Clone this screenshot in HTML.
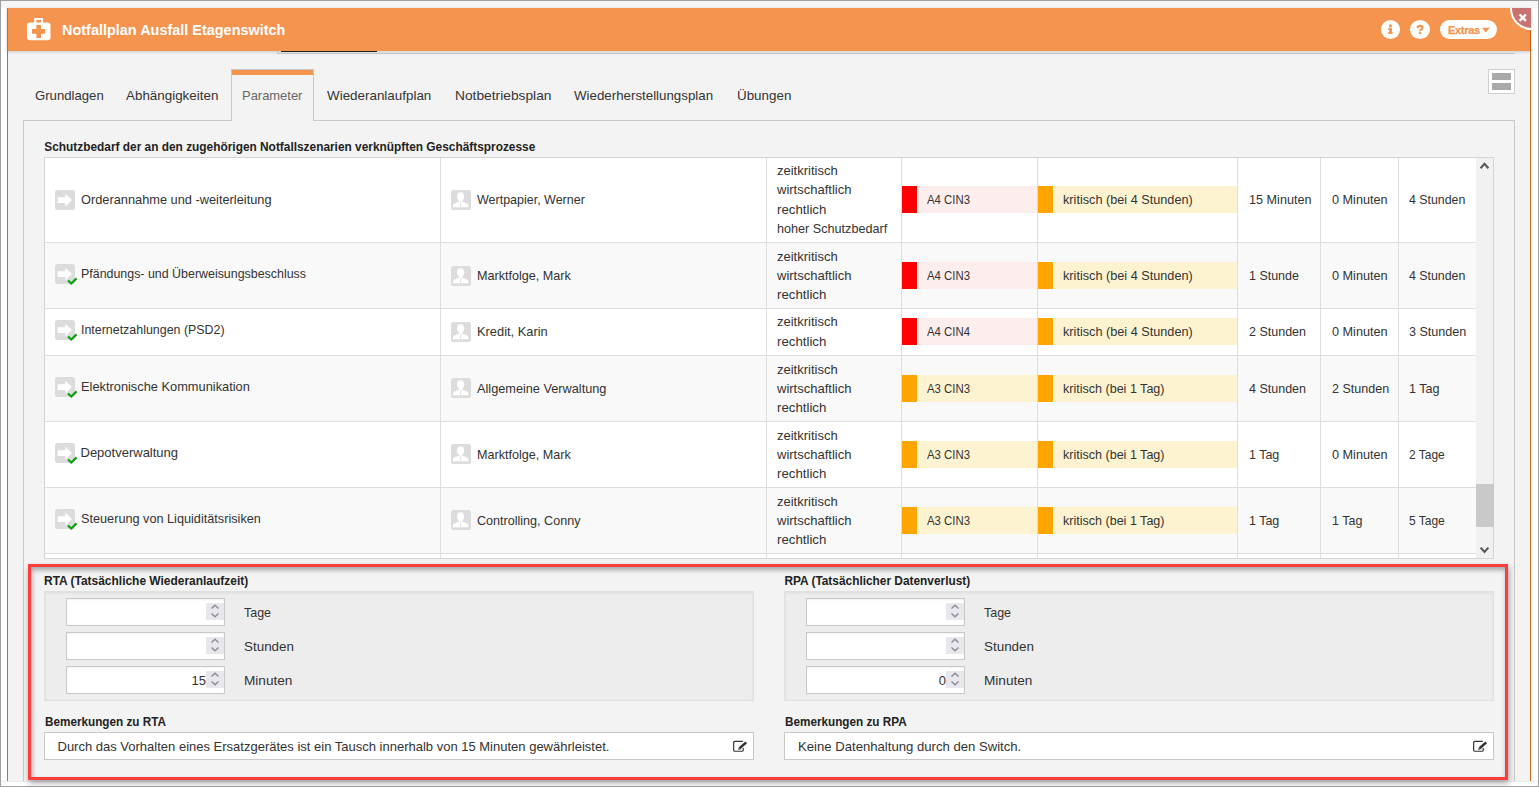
<!DOCTYPE html><html><head><meta charset="utf-8"><style>
html,body{margin:0;padding:0;}
body{width:1539px;height:787px;overflow:hidden;position:relative;background:#fff;font-family:"Liberation Sans",sans-serif;color:#333;}
.a{position:absolute;box-sizing:border-box;}
.t{position:absolute;white-space:nowrap;font-size:13px;line-height:19px;color:#333;}
.b{position:absolute;white-space:nowrap;font-size:11.88px;line-height:16px;font-weight:bold;color:#222;}
.h{position:absolute;white-space:nowrap;font-size:14.3px;line-height:19px;font-weight:bold;color:#fff;}
svg{position:absolute;overflow:visible;}
</style></head><body>
<div class="a" style="left:0px;top:0px;width:1539px;height:787px;border:1px solid #a0a0a0;background:#fff;"></div>
<div class="a" style="left:1px;top:1px;width:1537px;height:7px;background:#f6f6f6;"></div>
<div class="a" style="left:7px;top:8px;width:1524px;height:773px;background:#f3f3f3;border-left:1px solid #d2691e;border-right:1px solid #d2691e;"></div>
<div class="a" style="left:277px;top:40px;width:1238px;height:14px;border-bottom:1px solid #c9c9c9;border-left:1px solid #d5d5d5;background:#f3f3f3;"></div>
<div class="a" style="left:281px;top:50px;width:96px;height:2px;background:#222;"></div>
<div class="a" style="left:7px;top:8px;width:1524px;height:43px;background:#f4944f;box-shadow:0 1px 3px rgba(0,0,0,0.18);"></div>
<div class="a" style="left:7px;top:8px;width:1px;height:43px;background:#d2691e;"></div>
<svg style="left:27px;top:17px" width="24" height="24" viewBox="0 0 24 24">
<path fill="#fff" d="M7.2 1 H15.9 Q16.1 1 16.1 1.4 V5.6 H20.5 Q23.5 5.6 23.5 8.6 V20.3 Q23.5 23.3 20.5 23.3 H3 Q0 23.3 0 20.3 V8.6 Q0 5.6 3 5.6 H7.2 Z M9.4 3.1 V5.6 H14 V3.1 Z M9.4 7.9 V12.1 H5 V16.8 H9.4 V21 H14 V16.8 H18.2 V12.1 H14 V7.9 Z" fill-rule="evenodd"/>
</svg>
<div class="h" id="x1" style="left:61.5px;top:20.5px;transform:scaleX(1.0106);transform-origin:0 0;">Notfallplan Ausfall Etagenswitch</div>
<div class="a" style="left:1381px;top:20px;width:19px;height:19px;border-radius:50%;background:#fff;"></div>
<div class="a" style="left:1410px;top:20px;width:20px;height:19px;border-radius:50%;background:#fff;"></div>
<div class="a" style="left:1440px;top:20px;width:57px;height:19px;border-radius:10px;background:#fff;"></div>
<svg style="left:1375px;top:15px" width="60" height="30" viewBox="1375 15 60 30"><circle cx="1390.4" cy="25.9" r="1.55" fill="#f4944f"/><rect x="1388" y="28.3" width="3.9" height="1.6" fill="#f4944f"/><rect x="1389.2" y="28.3" width="2.7" height="5.5" fill="#f4944f"/><rect x="1387.9" y="32.2" width="4.8" height="1.6" fill="#f4944f"/><path d="M1417.7 28.1 Q1417.7 25.9 1420.1 25.9 Q1422.5 25.9 1422.5 27.8 Q1422.5 29 1420.8 29.8 Q1420.1 30.2 1420.1 31.3" stroke="#f4944f" stroke-width="2.1" fill="none"/><rect x="1418.9" y="32.1" width="2.4" height="1.8" fill="#f4944f"/></svg>
<div style="position:absolute;left:1448px;top:21px;height:19px;line-height:19px;font-weight:bold;font-size:11px;letter-spacing:-0.3px;-webkit-text-stroke:0.25px #f4944f;color:#f4944f;">Extras</div>
<svg style="left:1482px;top:27px" width="9" height="6"><path d="M0 0.7 H7.8 L3.9 5.4 Z" fill="#f4944f"/></svg>
<div class="a" style="left:1500px;top:8px;width:31px;height:23px;overflow:hidden;"><div class="a" style="left:10px;top:-21.5px;width:43px;height:43px;border-radius:50%;background:#c87272;border:2px solid #fff;"></div></div>
<svg style="left:1517px;top:12px" width="11" height="11"><path d="M2.6 2.5 L8.9 8.8 M8.9 2.5 L2.6 8.8" stroke="#fff" stroke-width="2.4"/></svg>
<div class="a" style="left:1530px;top:30px;width:1px;height:21px;background:#c0601a;"></div>
<div class="a" style="left:1488px;top:69px;width:27px;height:25px;background:#fff;border:1px solid #cfcfcf;"></div>
<div class="a" style="left:1492px;top:73px;width:19px;height:7px;background:#a9a9a9;"></div>
<div class="a" style="left:1492px;top:83px;width:19px;height:7px;background:#a9a9a9;"></div>
<div class="a" style="left:23px;top:120px;width:1492px;height:680px;border:1px solid #c8c8c8;background:#f3f3f3;"></div>
<div class="a" style="left:231px;top:69px;width:83px;height:52px;border:1px solid #c8c8c8;border-bottom:none;background:#f3f3f3;"></div>
<div class="a" style="left:232px;top:70px;width:81px;height:5px;background:#f4944f;"></div>
<div class="t" id="x2" style="left:34.6px;top:86.2px;color:#333;transform:scaleX(1.0119);transform-origin:0 0;">Grundlagen</div>
<div class="t" id="x3" style="left:126px;top:86.2px;color:#333;transform:scaleX(1.0303);transform-origin:0 0;">Abhängigkeiten</div>
<div class="t" id="x4" style="left:242.3px;top:86.2px;color:#666;transform:scaleX(0.9950);transform-origin:0 0;">Parameter</div>
<div class="t" id="x5" style="left:326.8px;top:86.2px;color:#333;transform:scaleX(1.0310);transform-origin:0 0;">Wiederanlaufplan</div>
<div class="t" id="x6" style="left:454.8px;top:86.2px;color:#333;transform:scaleX(1.0596);transform-origin:0 0;">Notbetriebsplan</div>
<div class="t" id="x7" style="left:573.8px;top:86.2px;color:#333;transform:scaleX(1.0237);transform-origin:0 0;">Wiederherstellungsplan</div>
<div class="t" id="x8" style="left:736.9px;top:86.2px;color:#333;transform:scaleX(1.0294);transform-origin:0 0;">Übungen</div>
<div class="b" id="x9" style="left:44.3px;top:139px;">Schutzbedarf der an den zugehörigen Notfallszenarien verknüpften Geschäftsprozesse</div>
<div class="a" style="left:44px;top:157px;width:1450px;height:402px;border:1px solid #d4d4d4;background:#fff;"></div>
<div class="a" style="left:45px;top:242px;width:1431px;height:1px;background:#dedede;"></div>
<div class="a" style="left:45px;top:243px;width:1431px;height:65px;background:#f9f9f9;"></div>
<div class="a" style="left:45px;top:308px;width:1431px;height:1px;background:#dedede;"></div>
<div class="a" style="left:45px;top:355px;width:1431px;height:1px;background:#dedede;"></div>
<div class="a" style="left:45px;top:356px;width:1431px;height:65px;background:#f9f9f9;"></div>
<div class="a" style="left:45px;top:421px;width:1431px;height:1px;background:#dedede;"></div>
<div class="a" style="left:45px;top:487px;width:1431px;height:1px;background:#dedede;"></div>
<div class="a" style="left:45px;top:488px;width:1431px;height:65px;background:#f9f9f9;"></div>
<div class="a" style="left:45px;top:553px;width:1431px;height:1px;background:#dedede;"></div>
<div class="a" style="left:45px;top:554px;width:1431px;height:4px;background:#fff;"></div>
<div class="a" style="left:440px;top:158px;width:1px;height:400px;background:#dedede;"></div>
<div class="a" style="left:766px;top:158px;width:1px;height:400px;background:#dedede;"></div>
<div class="a" style="left:901px;top:158px;width:1px;height:400px;background:#dedede;"></div>
<div class="a" style="left:1037px;top:158px;width:1px;height:400px;background:#dedede;"></div>
<div class="a" style="left:1237px;top:158px;width:1px;height:400px;background:#dedede;"></div>
<div class="a" style="left:1320px;top:158px;width:1px;height:400px;background:#dedede;"></div>
<div class="a" style="left:1398px;top:158px;width:1px;height:400px;background:#dedede;"></div>
<div class="a" style="left:1476px;top:158px;width:17px;height:400px;background:#f1f1f1;"></div>
<div class="a" style="left:1476px;top:484px;width:18px;height:43px;background:#c9c9c9;"></div>
<svg style="left:1479px;top:161px" width="11" height="9"><path d="M1.6 7.2 L5.5 2.9 L9.4 7.2" stroke="#555" stroke-width="2.1" fill="none"/></svg>
<svg style="left:1479px;top:546px" width="11" height="9"><path d="M1.6 1.6 L5.5 5.9 L9.4 1.6" stroke="#555" stroke-width="2.1" fill="none"/></svg>
<svg style="left:55px;top:190px" width="22" height="22" viewBox="0 0 22 22"><rect x="0" y="0" width="20" height="20" rx="2.5" fill="#dcdcdc"/><path d="M2.6 7.2 H10.3 V3.8 L17 10.1 L10.3 16.4 V13 H2.6 Z" fill="#fff"/></svg>
<div class="t" id="x10" style="left:80.5px;top:190px;transform:scaleX(0.9839);transform-origin:0 0;">Orderannahme und -weiterleitung</div>
<svg style="left:451px;top:190px" width="20" height="20" viewBox="0 0 20 20"><rect x="0" y="0" width="20" height="20" rx="2.5" fill="#dcdcdc"/><ellipse cx="9.6" cy="6.6" rx="3.5" ry="4.4" fill="#fff"/><path d="M7.8 10 L8.4 11.6 L3.5 13.4 Q1.8 14.2 1.8 16.2 V17.3 H17.6 V16.2 Q17.6 14.2 15.9 13.4 L11 11.6 L11.6 10 Z" fill="#fff"/><path d="M9.7 11.5 V17.3" stroke="#dcdcdc" stroke-width="0.9"/></svg>
<div class="t" id="x11" style="left:476.5px;top:190px;transform:scaleX(0.9607);transform-origin:0 0;">Wertpapier, Werner</div>
<div class="t" id="x12" style="left:777px;top:161px;">zeitkritisch</div>
<div class="t" id="x13" style="left:777px;top:180px;">wirtschaftlich</div>
<div class="t" id="x14" style="left:777px;top:200px;transform:scaleX(1.0191);transform-origin:0 0;">rechtlich</div>
<div class="t" id="x15" style="left:777px;top:219px;transform:scaleX(0.9717);transform-origin:0 0;">hoher Schutzbedarf</div>
<div class="a" style="left:902px;top:186px;width:15px;height:27px;background:#ff0000;"></div>
<div class="a" style="left:917px;top:186px;width:120px;height:27px;background:#feeded;"></div>
<div class="t" id="x16" style="left:927px;top:190px;transform:scaleX(0.8755);transform-origin:0 0;">A4 CIN3</div>
<div class="a" style="left:1038px;top:186px;width:15px;height:27px;background:#ffa500;"></div>
<div class="a" style="left:1053px;top:186px;width:184px;height:27px;background:#fef3d0;"></div>
<div class="t" id="x17" style="left:1063px;top:190px;transform:scaleX(0.9756);transform-origin:0 0;">kritisch (bei 4 Stunden)</div>
<div class="t" id="x18" style="left:1248.5px;top:190px;transform:scaleX(0.9714);transform-origin:0 0;">15 Minuten</div>
<div class="t" id="x19" style="left:1331.5px;top:190px;transform:scaleX(0.9732);transform-origin:0 0;">0 Minuten</div>
<div class="t" id="x20" style="left:1409.3px;top:190px;transform:scaleX(0.9508);transform-origin:0 0;">4 Stunden</div>
<svg style="left:55px;top:264px" width="22" height="22" viewBox="0 0 22 22"><rect x="0" y="0" width="20" height="20" rx="2.5" fill="#dcdcdc"/><path d="M2.6 7.2 H10.3 V3.8 L17 10.1 L10.3 16.4 V13 H2.6 Z" fill="#fff"/><path d="M13 16.5 L16.3 19.6 L21.6 14.4" stroke="#0ca00c" stroke-width="2.2" fill="none"/></svg>
<div class="t" id="x21" style="left:80.5px;top:264px;transform:scaleX(0.9549);transform-origin:0 0;">Pfändungs- und Überweisungsbeschluss</div>
<svg style="left:451px;top:266px" width="20" height="20" viewBox="0 0 20 20"><rect x="0" y="0" width="20" height="20" rx="2.5" fill="#dcdcdc"/><ellipse cx="9.6" cy="6.6" rx="3.5" ry="4.4" fill="#fff"/><path d="M7.8 10 L8.4 11.6 L3.5 13.4 Q1.8 14.2 1.8 16.2 V17.3 H17.6 V16.2 Q17.6 14.2 15.9 13.4 L11 11.6 L11.6 10 Z" fill="#fff"/><path d="M9.7 11.5 V17.3" stroke="#dcdcdc" stroke-width="0.9"/></svg>
<div class="t" id="x22" style="left:476.5px;top:266px;transform:scaleX(0.9688);transform-origin:0 0;">Marktfolge, Mark</div>
<div class="t" id="x23" style="left:777px;top:247px;">zeitkritisch</div>
<div class="t" id="x24" style="left:777px;top:266px;">wirtschaftlich</div>
<div class="t" id="x25" style="left:777px;top:285px;transform:scaleX(1.0191);transform-origin:0 0;">rechtlich</div>
<div class="a" style="left:902px;top:262px;width:15px;height:27px;background:#ff0000;"></div>
<div class="a" style="left:917px;top:262px;width:120px;height:27px;background:#feeded;"></div>
<div class="t" id="x26" style="left:927px;top:266px;transform:scaleX(0.8755);transform-origin:0 0;">A4 CIN3</div>
<div class="a" style="left:1038px;top:262px;width:15px;height:27px;background:#ffa500;"></div>
<div class="a" style="left:1053px;top:262px;width:184px;height:27px;background:#fef3d0;"></div>
<div class="t" id="x27" style="left:1063px;top:266px;transform:scaleX(0.9756);transform-origin:0 0;">kritisch (bei 4 Stunden)</div>
<div class="t" id="x28" style="left:1248.5px;top:266px;transform:scaleX(0.9588);transform-origin:0 0;">1 Stunde</div>
<div class="t" id="x29" style="left:1331.5px;top:266px;transform:scaleX(0.9732);transform-origin:0 0;">0 Minuten</div>
<div class="t" id="x30" style="left:1409.3px;top:266px;transform:scaleX(0.9508);transform-origin:0 0;">4 Stunden</div>
<svg style="left:55px;top:320px" width="22" height="22" viewBox="0 0 22 22"><rect x="0" y="0" width="20" height="20" rx="2.5" fill="#dcdcdc"/><path d="M2.6 7.2 H10.3 V3.8 L17 10.1 L10.3 16.4 V13 H2.6 Z" fill="#fff"/><path d="M13 16.5 L16.3 19.6 L21.6 14.4" stroke="#0ca00c" stroke-width="2.2" fill="none"/></svg>
<div class="t" id="x31" style="left:80.5px;top:320px;transform:scaleX(0.9554);transform-origin:0 0;">Internetzahlungen (PSD2)</div>
<svg style="left:451px;top:322px" width="20" height="20" viewBox="0 0 20 20"><rect x="0" y="0" width="20" height="20" rx="2.5" fill="#dcdcdc"/><ellipse cx="9.6" cy="6.6" rx="3.5" ry="4.4" fill="#fff"/><path d="M7.8 10 L8.4 11.6 L3.5 13.4 Q1.8 14.2 1.8 16.2 V17.3 H17.6 V16.2 Q17.6 14.2 15.9 13.4 L11 11.6 L11.6 10 Z" fill="#fff"/><path d="M9.7 11.5 V17.3" stroke="#dcdcdc" stroke-width="0.9"/></svg>
<div class="t" id="x32" style="left:476.5px;top:322px;transform:scaleX(0.9886);transform-origin:0 0;">Kredit, Karin</div>
<div class="t" id="x33" style="left:777px;top:312px;">zeitkritisch</div>
<div class="t" id="x34" style="left:777px;top:332px;transform:scaleX(1.0191);transform-origin:0 0;">rechtlich</div>
<div class="a" style="left:902px;top:318px;width:15px;height:27px;background:#ff0000;"></div>
<div class="a" style="left:917px;top:318px;width:120px;height:27px;background:#feeded;"></div>
<div class="t" id="x35" style="left:927px;top:322px;transform:scaleX(0.8755);transform-origin:0 0;">A4 CIN4</div>
<div class="a" style="left:1038px;top:318px;width:15px;height:27px;background:#ffa500;"></div>
<div class="a" style="left:1053px;top:318px;width:184px;height:27px;background:#fef3d0;"></div>
<div class="t" id="x36" style="left:1063px;top:322px;transform:scaleX(0.9756);transform-origin:0 0;">kritisch (bei 4 Stunden)</div>
<div class="t" id="x37" style="left:1248.5px;top:322px;transform:scaleX(0.9621);transform-origin:0 0;">2 Stunden</div>
<div class="t" id="x38" style="left:1331.5px;top:322px;transform:scaleX(0.9732);transform-origin:0 0;">0 Minuten</div>
<div class="t" id="x39" style="left:1409.3px;top:322px;transform:scaleX(0.9672);transform-origin:0 0;">3 Stunden</div>
<svg style="left:55px;top:377px" width="22" height="22" viewBox="0 0 22 22"><rect x="0" y="0" width="20" height="20" rx="2.5" fill="#dcdcdc"/><path d="M2.6 7.2 H10.3 V3.8 L17 10.1 L10.3 16.4 V13 H2.6 Z" fill="#fff"/><path d="M13 16.5 L16.3 19.6 L21.6 14.4" stroke="#0ca00c" stroke-width="2.2" fill="none"/></svg>
<div class="t" id="x40" style="left:80.5px;top:377px;transform:scaleX(0.9859);transform-origin:0 0;">Elektronische Kommunikation</div>
<svg style="left:451px;top:378px" width="20" height="20" viewBox="0 0 20 20"><rect x="0" y="0" width="20" height="20" rx="2.5" fill="#dcdcdc"/><ellipse cx="9.6" cy="6.6" rx="3.5" ry="4.4" fill="#fff"/><path d="M7.8 10 L8.4 11.6 L3.5 13.4 Q1.8 14.2 1.8 16.2 V17.3 H17.6 V16.2 Q17.6 14.2 15.9 13.4 L11 11.6 L11.6 10 Z" fill="#fff"/><path d="M9.7 11.5 V17.3" stroke="#dcdcdc" stroke-width="0.9"/></svg>
<div class="t" id="x41" style="left:476.5px;top:379px;transform:scaleX(0.9786);transform-origin:0 0;">Allgemeine Verwaltung</div>
<div class="t" id="x42" style="left:777px;top:360px;">zeitkritisch</div>
<div class="t" id="x43" style="left:777px;top:379px;">wirtschaftlich</div>
<div class="t" id="x44" style="left:777px;top:398px;transform:scaleX(1.0191);transform-origin:0 0;">rechtlich</div>
<div class="a" style="left:902px;top:375px;width:15px;height:27px;background:#ffa500;"></div>
<div class="a" style="left:917px;top:375px;width:120px;height:27px;background:#fef3d0;"></div>
<div class="t" id="x45" style="left:927px;top:379px;transform:scaleX(0.8755);transform-origin:0 0;">A3 CIN3</div>
<div class="a" style="left:1038px;top:375px;width:15px;height:27px;background:#ffa500;"></div>
<div class="a" style="left:1053px;top:375px;width:184px;height:27px;background:#fef3d0;"></div>
<div class="t" id="x46" style="left:1063px;top:379px;transform:scaleX(0.9644);transform-origin:0 0;">kritisch (bei 1 Tag)</div>
<div class="t" id="x47" style="left:1248.5px;top:379px;transform:scaleX(0.9621);transform-origin:0 0;">4 Stunden</div>
<div class="t" id="x48" style="left:1331.5px;top:379px;transform:scaleX(0.9638);transform-origin:0 0;">2 Stunden</div>
<div class="t" id="x49" style="left:1409.3px;top:379px;transform:scaleX(0.9700);transform-origin:0 0;">1 Tag</div>
<svg style="left:55px;top:443px" width="22" height="22" viewBox="0 0 22 22"><rect x="0" y="0" width="20" height="20" rx="2.5" fill="#dcdcdc"/><path d="M2.6 7.2 H10.3 V3.8 L17 10.1 L10.3 16.4 V13 H2.6 Z" fill="#fff"/><path d="M13 16.5 L16.3 19.6 L21.6 14.4" stroke="#0ca00c" stroke-width="2.2" fill="none"/></svg>
<div class="t" id="x50" style="left:80.5px;top:443px;">Depotverwaltung</div>
<svg style="left:451px;top:444px" width="20" height="20" viewBox="0 0 20 20"><rect x="0" y="0" width="20" height="20" rx="2.5" fill="#dcdcdc"/><ellipse cx="9.6" cy="6.6" rx="3.5" ry="4.4" fill="#fff"/><path d="M7.8 10 L8.4 11.6 L3.5 13.4 Q1.8 14.2 1.8 16.2 V17.3 H17.6 V16.2 Q17.6 14.2 15.9 13.4 L11 11.6 L11.6 10 Z" fill="#fff"/><path d="M9.7 11.5 V17.3" stroke="#dcdcdc" stroke-width="0.9"/></svg>
<div class="t" id="x51" style="left:476.5px;top:445px;transform:scaleX(0.9688);transform-origin:0 0;">Marktfolge, Mark</div>
<div class="t" id="x52" style="left:777px;top:426px;">zeitkritisch</div>
<div class="t" id="x53" style="left:777px;top:445px;">wirtschaftlich</div>
<div class="t" id="x54" style="left:777px;top:464px;transform:scaleX(1.0191);transform-origin:0 0;">rechtlich</div>
<div class="a" style="left:902px;top:441px;width:15px;height:27px;background:#ffa500;"></div>
<div class="a" style="left:917px;top:441px;width:120px;height:27px;background:#fef3d0;"></div>
<div class="t" id="x55" style="left:927px;top:445px;transform:scaleX(0.8755);transform-origin:0 0;">A3 CIN3</div>
<div class="a" style="left:1038px;top:441px;width:15px;height:27px;background:#ffa500;"></div>
<div class="a" style="left:1053px;top:441px;width:184px;height:27px;background:#fef3d0;"></div>
<div class="t" id="x56" style="left:1063px;top:445px;transform:scaleX(0.9644);transform-origin:0 0;">kritisch (bei 1 Tag)</div>
<div class="t" id="x57" style="left:1248.5px;top:445px;transform:scaleX(0.9600);transform-origin:0 0;">1 Tag</div>
<div class="t" id="x58" style="left:1331.5px;top:445px;transform:scaleX(0.9732);transform-origin:0 0;">0 Minuten</div>
<div class="t" id="x59" style="left:1409.3px;top:445px;transform:scaleX(0.9211);transform-origin:0 0;">2 Tage</div>
<svg style="left:55px;top:509px" width="22" height="22" viewBox="0 0 22 22"><rect x="0" y="0" width="20" height="20" rx="2.5" fill="#dcdcdc"/><path d="M2.6 7.2 H10.3 V3.8 L17 10.1 L10.3 16.4 V13 H2.6 Z" fill="#fff"/><path d="M13 16.5 L16.3 19.6 L21.6 14.4" stroke="#0ca00c" stroke-width="2.2" fill="none"/></svg>
<div class="t" id="x60" style="left:80.5px;top:509px;transform:scaleX(0.9760);transform-origin:0 0;">Steuerung von Liquiditätsrisiken</div>
<svg style="left:451px;top:510px" width="20" height="20" viewBox="0 0 20 20"><rect x="0" y="0" width="20" height="20" rx="2.5" fill="#dcdcdc"/><ellipse cx="9.6" cy="6.6" rx="3.5" ry="4.4" fill="#fff"/><path d="M7.8 10 L8.4 11.6 L3.5 13.4 Q1.8 14.2 1.8 16.2 V17.3 H17.6 V16.2 Q17.6 14.2 15.9 13.4 L11 11.6 L11.6 10 Z" fill="#fff"/><path d="M9.7 11.5 V17.3" stroke="#dcdcdc" stroke-width="0.9"/></svg>
<div class="t" id="x61" style="left:476.5px;top:511px;transform:scaleX(0.9673);transform-origin:0 0;">Controlling, Conny</div>
<div class="t" id="x62" style="left:777px;top:492px;">zeitkritisch</div>
<div class="t" id="x63" style="left:777px;top:511px;">wirtschaftlich</div>
<div class="t" id="x64" style="left:777px;top:530px;transform:scaleX(1.0191);transform-origin:0 0;">rechtlich</div>
<div class="a" style="left:902px;top:507px;width:15px;height:27px;background:#ffa500;"></div>
<div class="a" style="left:917px;top:507px;width:120px;height:27px;background:#fef3d0;"></div>
<div class="t" id="x65" style="left:927px;top:511px;transform:scaleX(0.8755);transform-origin:0 0;">A3 CIN3</div>
<div class="a" style="left:1038px;top:507px;width:15px;height:27px;background:#ffa500;"></div>
<div class="a" style="left:1053px;top:507px;width:184px;height:27px;background:#fef3d0;"></div>
<div class="t" id="x66" style="left:1063px;top:511px;transform:scaleX(0.9644);transform-origin:0 0;">kritisch (bei 1 Tag)</div>
<div class="t" id="x67" style="left:1248.5px;top:511px;transform:scaleX(0.9600);transform-origin:0 0;">1 Tag</div>
<div class="t" id="x68" style="left:1331.5px;top:511px;transform:scaleX(0.9633);transform-origin:0 0;">1 Tag</div>
<div class="t" id="x69" style="left:1409.3px;top:511px;transform:scaleX(0.9211);transform-origin:0 0;">5 Tage</div>
<div class="a" style="left:1px;top:781px;width:1537px;height:5px;background:#fff;"></div>
<div class="a" style="left:1px;top:781px;width:1537px;height:1px;background:#ececec;"></div>
<div class="a" style="left:0px;top:786px;width:1539px;height:1px;background:#a0a0a0;"></div>
<div class="a" style="left:28px;top:564px;width:1480px;height:216px;border:3px solid #fc3d3d;box-shadow:1px 3px 6px rgba(0,0,0,0.35), inset 1px 3px 5px rgba(0,0,0,0.32);"></div>
<div class="b" id="x70" style="left:44.4px;top:573.2px;transform:scaleX(1.0064);transform-origin:0 0;">RTA (Tatsächliche Wiederanlaufzeit)</div>
<div class="a" style="left:44px;top:591px;width:710px;height:110px;background:#ededed;border:1px solid #e0e0e0;box-shadow:inset 0 1px 3px rgba(0,0,0,0.07);"></div>
<div class="a" style="left:66px;top:598px;width:159px;height:28px;background:#fff;border:1px solid #c8c8c8;box-shadow:inset 0 1px 2px rgba(0,0,0,0.06);"></div>
<div class="a" style="left:206px;top:603px;width:18px;height:17px;background:#e8e8ec;"></div>
<svg style="left:210px;top:604px" width="10" height="16"><path d="M1.5 4.5 L5 1.2 L8.5 4.5 M1.5 9.5 L5 12.8 L8.5 9.5" stroke="#8a8a99" stroke-width="1.4" fill="none"/></svg>
<div class="t" id="x71" style="left:244px;top:603px;transform:scaleX(0.9571);transform-origin:0 0;">Tage</div>
<div class="a" style="left:66px;top:632px;width:159px;height:28px;background:#fff;border:1px solid #c8c8c8;box-shadow:inset 0 1px 2px rgba(0,0,0,0.06);"></div>
<div class="a" style="left:206px;top:637px;width:18px;height:17px;background:#e8e8ec;"></div>
<svg style="left:210px;top:638px" width="10" height="16"><path d="M1.5 4.5 L5 1.2 L8.5 4.5 M1.5 9.5 L5 12.8 L8.5 9.5" stroke="#8a8a99" stroke-width="1.4" fill="none"/></svg>
<div class="t" id="x72" style="left:244px;top:637px;transform:scaleX(1.0319);transform-origin:0 0;">Stunden</div>
<div class="a" style="left:66px;top:666px;width:159px;height:28px;background:#fff;border:1px solid #c8c8c8;box-shadow:inset 0 1px 2px rgba(0,0,0,0.06);"></div>
<div class="a" style="left:206px;top:671px;width:18px;height:17px;background:#e8e8ec;"></div>
<svg style="left:210px;top:672px" width="10" height="16"><path d="M1.5 4.5 L5 1.2 L8.5 4.5 M1.5 9.5 L5 12.8 L8.5 9.5" stroke="#8a8a99" stroke-width="1.4" fill="none"/></svg>
<div class="t" id="x73" style="left:244px;top:671px;transform:scaleX(1.0467);transform-origin:0 0;">Minuten</div>
<div class="t" style="left:144px;width:62px;text-align:right;top:670.9px;">15</div>
<div class="b" id="x74" style="left:784.4px;top:573.2px;">RPA (Tatsächlicher Datenverlust)</div>
<div class="a" style="left:784px;top:591px;width:710px;height:110px;background:#ededed;border:1px solid #e0e0e0;box-shadow:inset 0 1px 3px rgba(0,0,0,0.07);"></div>
<div class="a" style="left:806px;top:598px;width:159px;height:28px;background:#fff;border:1px solid #c8c8c8;box-shadow:inset 0 1px 2px rgba(0,0,0,0.06);"></div>
<div class="a" style="left:946px;top:603px;width:18px;height:17px;background:#e8e8ec;"></div>
<svg style="left:950px;top:604px" width="10" height="16"><path d="M1.5 4.5 L5 1.2 L8.5 4.5 M1.5 9.5 L5 12.8 L8.5 9.5" stroke="#8a8a99" stroke-width="1.4" fill="none"/></svg>
<div class="t" id="x75" style="left:984px;top:603px;transform:scaleX(0.9571);transform-origin:0 0;">Tage</div>
<div class="a" style="left:806px;top:632px;width:159px;height:28px;background:#fff;border:1px solid #c8c8c8;box-shadow:inset 0 1px 2px rgba(0,0,0,0.06);"></div>
<div class="a" style="left:946px;top:637px;width:18px;height:17px;background:#e8e8ec;"></div>
<svg style="left:950px;top:638px" width="10" height="16"><path d="M1.5 4.5 L5 1.2 L8.5 4.5 M1.5 9.5 L5 12.8 L8.5 9.5" stroke="#8a8a99" stroke-width="1.4" fill="none"/></svg>
<div class="t" id="x76" style="left:984px;top:637px;transform:scaleX(1.0319);transform-origin:0 0;">Stunden</div>
<div class="a" style="left:806px;top:666px;width:159px;height:28px;background:#fff;border:1px solid #c8c8c8;box-shadow:inset 0 1px 2px rgba(0,0,0,0.06);"></div>
<div class="a" style="left:946px;top:671px;width:18px;height:17px;background:#e8e8ec;"></div>
<svg style="left:950px;top:672px" width="10" height="16"><path d="M1.5 4.5 L5 1.2 L8.5 4.5 M1.5 9.5 L5 12.8 L8.5 9.5" stroke="#8a8a99" stroke-width="1.4" fill="none"/></svg>
<div class="t" id="x77" style="left:984px;top:671px;transform:scaleX(1.0467);transform-origin:0 0;">Minuten</div>
<div class="t" style="left:884px;width:62px;text-align:right;top:670.9px;">0</div>
<div class="b" id="x78" style="left:44.5px;top:713.8px;transform:scaleX(0.9877);transform-origin:0 0;">Bemerkungen zu RTA</div>
<div class="a" style="left:44px;top:732px;width:710px;height:28px;background:#fff;border:1px solid #c8c8c8;"></div>
<div class="t" id="x79" style="left:57.5px;top:736.7px;">Durch das Vorhalten eines Ersatzgerätes ist ein Tausch innerhalb von 15 Minuten gewährleistet.</div>
<svg style="left:733px;top:740px" width="15" height="13" viewBox="0 0 15 13"><path d="M9.8 1.35 H2 Q0.65 1.35 0.65 2.7 V9.9 Q0.65 11.25 2 11.25 H8.9 Q10.25 11.25 10.25 9.9 V8" stroke="#333" stroke-width="1.15" fill="none"/><path d="M6.6 8.3 L13.2 2.4" stroke="#333" stroke-width="2.5"/><path d="M5.2 9.9 L5.7 7.6 L7.5 9.3 Z" fill="#333"/></svg>
<div class="b" id="x80" style="left:784.5px;top:713.8px;transform:scaleX(0.9877);transform-origin:0 0;">Bemerkungen zu RPA</div>
<div class="a" style="left:784px;top:732px;width:710px;height:28px;background:#fff;border:1px solid #c8c8c8;"></div>
<div class="t" id="x81" style="left:797.5px;top:736.7px;transform:scaleX(1.0095);transform-origin:0 0;">Keine Datenhaltung durch den Switch.</div>
<svg style="left:1473px;top:740px" width="15" height="13" viewBox="0 0 15 13"><path d="M9.8 1.35 H2 Q0.65 1.35 0.65 2.7 V9.9 Q0.65 11.25 2 11.25 H8.9 Q10.25 11.25 10.25 9.9 V8" stroke="#333" stroke-width="1.15" fill="none"/><path d="M6.6 8.3 L13.2 2.4" stroke="#333" stroke-width="2.5"/><path d="M5.2 9.9 L5.7 7.6 L7.5 9.3 Z" fill="#333"/></svg>
</body></html>
